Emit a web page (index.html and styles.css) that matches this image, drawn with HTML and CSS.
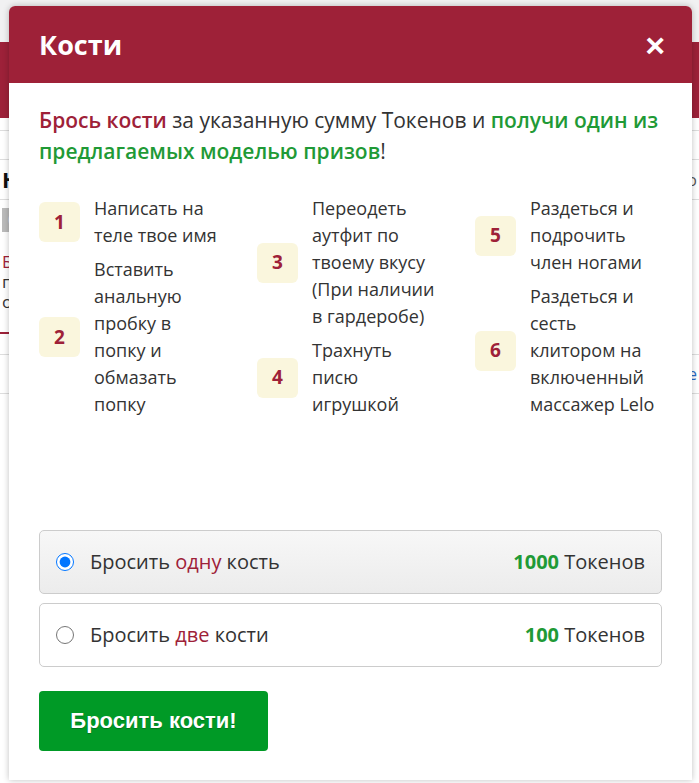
FILE: index.html
```html
<!DOCTYPE html>
<html>
<head>
<meta charset="utf-8">
<link rel="stylesheet" href="styles.css">
</head>
<body>

<div class="page">
  <div class="page-top"></div>
  <div class="page-bar"></div>
  <div class="page-tabs"></div>
  <div class="page-row page-title">
    <span>Настройки</span>
    <span class="muted">Обновлено</span>
  </div>
  <div class="page-row page-chip"><span class="chip">000</span></div>
  <div class="page-row page-text">
    <span class="red">Бросок</span>
    <span>пример текста</span>
    <span>описание (1)</span>
  </div>
  <div class="page-line"></div>
  <div class="page-row page-link"><span class="blue">Подробнее</span></div>
</div>

<div class="modal">
  <div class="modal-header">
    <h2 class="modal-title">Кости</h2>
    <span class="modal-close">&times;</span>
  </div>
  <div class="modal-body">
    <p class="intro">
      <span class="red">Брось кости</span> за указанную сумму Токенов и
      <span class="green">получи один из предлагаемых моделью призов</span>!
    </p>

    <div class="prizes">
      <div class="prize-col">
        <div class="prize"><span class="num">1</span><span class="txt">Написать на теле твое имя</span></div>
        <div class="prize"><span class="num">2</span><span class="txt">Вставить анальную пробку в попку и обмазать попку</span></div>
      </div>
      <div class="prize-col">
        <div class="prize"><span class="num">3</span><span class="txt">Переодеть аутфит по твоему вкусу (При наличии в гардеробе)</span></div>
        <div class="prize"><span class="num">4</span><span class="txt">Трахнуть писю игрушкой</span></div>
      </div>
      <div class="prize-col">
        <div class="prize"><span class="num">5</span><span class="txt">Раздеться и подрочить член ногами</span></div>
        <div class="prize"><span class="num">6</span><span class="txt">Раздеться и сесть клитором на включенный массажер Lelo</span></div>
      </div>
    </div>

    <label class="option active">
      <input type="radio" name="dice" checked>
      <span class="opt-label">Бросить <span class="red">одну</span> кость</span>
      <span class="opt-price"><b class="green">1000</b> Токенов</span>
    </label>
    <label class="option">
      <input type="radio" name="dice">
      <span class="opt-label">Бросить <span class="red">две</span> кости</span>
      <span class="opt-price"><b class="green">100</b> Токенов</span>
    </label>

    <button class="roll">Бросить кости!</button>
  </div>
</div>

</body>
</html>
```

FILE: styles.css
```css
*, *:before, *:after {
  box-sizing: border-box;
}

body {
  margin: 0;
  background: #fff;
  font: 16px/1.5 'Open Sans', 'Liberation Sans', sans-serif;
  color: #333;
  overflow: hidden;
}

/* page behind the dialog */
.page {
  height: 783px;
  background: #fff;
}
.page-top {
  height: 42px;
  background: #f1f1f2;
}
.page-bar {
  height: 76px;
  background: #9d2139;
}
.page-tabs {
  height: 30px;
  margin-top: 12px;
  border-top: 1px solid #ddd;
  border-bottom: 1px solid #ddd;
}
.page-row {
  display: flex;
  justify-content: space-between;
  padding: 0 2px;
}
.page-title {
  font-weight: 700;
  font-size: 22px;
  color: #111;
  height: 40px;
  align-items: center;
  border-bottom: 1px solid #ddd;
}
.page-title .muted {
  font-weight: 400;
  font-size: 16px;
  color: #555;
}
.page-chip {
  height: 40px;
  align-items: center;
}
.chip {
  background: #bbb;
  color: #eee;
  padding: 0 6px;
}
.page-text {
  flex-direction: column;
  font-size: 17px;
  line-height: 20px;
  padding-top: 12px;
}
.page-line {
  margin: 20px 0 0;
  width: 30px;
  border-top: 2px solid #9d2139;
}
.page-link {
  margin-top: 20px;
  border-top: 1px solid #ddd;
  border-bottom: 1px solid #ddd;
  height: 40px;
  align-items: center;
  justify-content: flex-end;
}
.blue { color: #2a6bc4; }

/* dialog */
.modal {
  position: absolute;
  top: 6px;
  left: 9px;
  width: 683px;
  background: #fff;
  border-radius: 6px 6px 0 0;
  box-shadow: 0 0 6px rgba(0, 0, 0, .25);
}
.modal-header {
  height: 77px;
  background: #9e2138;
  border-radius: 6px 6px 0 0;
  display: flex;
  align-items: center;
  justify-content: space-between;
  padding: 0 27px 0 30px;
  color: #fff;
}
.modal-title {
  margin: 0;
  font-size: 27px;
  font-weight: 700;
  line-height: 1;
}
.modal-close {
  font-family: 'Liberation Sans', sans-serif;
  font-size: 34px;
  line-height: 1;
  font-weight: 700;
}
.modal-body {
  padding: 22px 30px 29px;
}

.red { color: #9e2138; }
.green { color: #1f9a36; }

.intro {
  margin: 0;
  font-size: 21px;
  line-height: 31px;
}
.intro .red,
.intro .green {
  font-weight: 600;
}

.prizes {
  display: grid;
  grid-template-columns: 218px 218px 1fr;
  margin-top: 28px;
  height: 335px;
}
.prize-col {
  display: flex;
  flex-direction: column;
  gap: 7px;
}
.prize {
  display: flex;
  align-items: center;
  gap: 14px;
}
.num {
  flex: none;
  width: 41px;
  height: 40px;
  border-radius: 6px;
  background: #faf6dd;
  color: #9e2138;
  font-weight: 700;
  font-size: 19px;
  display: flex;
  align-items: center;
  justify-content: center;
}
.txt {
  width: 128px;
  font-size: 18px;
  line-height: 27px;
}

.option {
  display: flex;
  align-items: center;
  height: 64px;
  padding: 0 16px 0 16px;
  border: 1px solid #ccc;
  border-radius: 5px;
  margin-bottom: 9px;
  font-size: 20px;
  cursor: pointer;
}
.option.active {
  background: linear-gradient(#f7f7f7, #ececec);
}
.option input {
  width: 18px;
  height: 18px;
  margin: 0 16px 0 0;
}
.opt-label {
  flex: 1;
}

.roll {
  margin-top: 15px;
  width: 229px;
  height: 60px;
  border: 0;
  border-radius: 4px;
  background: #009a26;
  color: #fff;
  font: 700 22px 'Liberation Sans', Arial, sans-serif;
  text-shadow: 0 1px 1px rgba(0, 0, 0, .25);
  cursor: pointer;
}
```
